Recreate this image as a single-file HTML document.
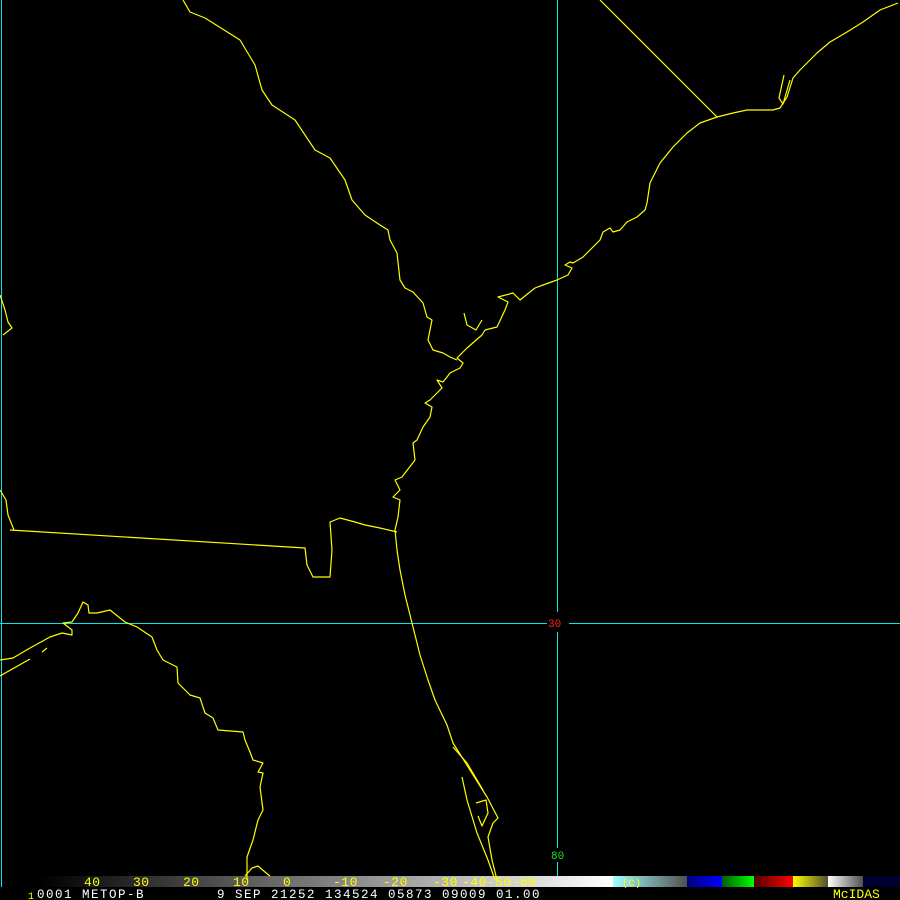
<!DOCTYPE html>
<html><head><style>
html,body{margin:0;padding:0;background:#000;width:900px;height:900px;overflow:hidden}
svg{position:absolute;left:0;top:0}
.t{font-family:"Liberation Mono",monospace;font-size:12.5px;letter-spacing:1.5px}
</style></head><body>
<svg width="900" height="900" viewBox="0 0 900 900">
<defs>
<linearGradient id="g" x1="0" x2="1">
<stop offset="0" stop-color="#000"/><stop offset="1" stop-color="#fff"/>
</linearGradient>
<linearGradient id="c" x1="0" x2="1"><stop offset="0" stop-color="#a0ffff"/><stop offset="1" stop-color="#505050"/></linearGradient>
<linearGradient id="b" x1="0" x2="1"><stop offset="0" stop-color="#000080"/><stop offset="1" stop-color="#0000ff"/></linearGradient>
<linearGradient id="gr" x1="0" x2="1"><stop offset="0" stop-color="#006000"/><stop offset="1" stop-color="#00ff00"/></linearGradient>
<linearGradient id="r" x1="0" x2="1"><stop offset="0" stop-color="#500000"/><stop offset="1" stop-color="#ff0000"/></linearGradient>
<linearGradient id="y" x1="0" x2="1"><stop offset="0" stop-color="#ffff00"/><stop offset="1" stop-color="#505030"/></linearGradient>
<linearGradient id="w" x1="0" x2="1"><stop offset="0" stop-color="#ffffff"/><stop offset="1" stop-color="#505050"/></linearGradient>
</defs>
<rect x="40" y="876" width="573" height="11" fill="url(#g)"/>
<rect x="613" y="876" width="74" height="11" fill="url(#c)"/>
<rect x="687" y="876" width="35" height="11" fill="url(#b)"/>
<rect x="722" y="876" width="32" height="11" fill="url(#gr)"/>
<rect x="754" y="876" width="39" height="11" fill="url(#r)"/>
<rect x="793" y="876" width="35" height="11" fill="url(#y)"/>
<rect x="828" y="876" width="35" height="11" fill="url(#w)"/>
<rect x="863" y="876" width="37" height="11" fill="#000030"/>
<g fill="#00e8e8">
<rect x="1" y="0" width="1" height="887"/>
<rect x="557" y="0" width="1" height="612"/>
<rect x="557" y="632" width="1" height="216"/>
<rect x="557" y="862" width="1" height="14"/>
<rect x="0" y="623" width="547" height="1"/>
<rect x="569" y="623" width="331" height="1"/>
</g>
<text x="548" y="627" fill="#ff2020" class="t" style="font-size:11px;letter-spacing:0">30</text>
<text x="551" y="859" fill="#20e020" class="t" style="font-size:11px;letter-spacing:0">80</text>
<g stroke="#ffff00" stroke-width="1.2" fill="none" stroke-linejoin="round">
<polyline points="183,0 190,12 205,18 240,40 255,65 262,90 272,105 295,120 315,150 330,158 345,180 352,200 365,215 380,225 388,230 390,240 397,253 400,280 405,288 413,292 423,303 427,317 432,320 428,340 433,350 443,353 450,357 457,360"/>
<polyline points="600,0 717,117"/>
<polyline points="898,3 880,10 863,22 847,32 830,42 817,53 800,70 793,78 787,97 780,108 773,110 747,110 733,113 717,117 700,123 687,133 673,147 660,163 650,183 647,203 645,210 637,217 627,222 620,230 613,232 610,228 603,232 600,240 593,247 583,257 573,263 570,262 565,265 572,268 568,275 557,280 543,285 535,288 520,300 513,293 498,297 508,302 505,310 497,327 485,330 482,335 467,348 462,353 457,358 463,363 460,368 450,373 447,377 443,382 437,380 442,388 430,400 425,403 432,407 430,417 423,427 417,440 413,443 415,460 402,477 395,480 400,490 393,497 400,500 398,517 395,530 397,550 400,570 405,595 410,615 415,635 420,655 428,680 435,700 447,725 453,743 470,770 487,797 498,818 493,823 488,837 492,860 497,880"/>
<polyline points="462,777 467,800 477,833 488,860 495,880"/>
<polyline points="453,747 467,763 483,790"/>
<polyline points="476,803 486,800 488,813 482,826 478,816"/>
<polyline points="464,313 467,325 476,330 482,320"/>
<polyline points="784,75 779,98 783,104 790,80"/>
<polyline points="10,530 305,548 307,565 313,577 330,577 332,550 330,522 340,518 355,522 365,525 380,528 397,532"/>
<polyline points="0,295 5,310 8,322 12,328 3,335"/>
<polyline points="0,490 6,500 8,515 14,530"/>
<polyline points="0,660 13,658 30,648 50,637 62,633 72,635 72,630 63,623 72,622 78,613 83,602 88,605 89,613 97,613 110,610 125,622 137,627 152,637 157,650 163,660 177,667 178,683 190,695 200,698 205,713 213,718 218,730 243,732 245,740 250,752 253,760 263,763 258,772 263,773 260,787 263,810 258,820 253,840 247,857 247,880"/>
<polyline points="0,676 30,659"/>
<polyline points="42,652 47,648"/>
<polyline points="245,876 252,868 258,866 265,872 270,876"/>
</g>
<g class="t" fill="#ffff00" style="font-size:13px;letter-spacing:0.5px">
<text x="84" y="886">40</text><text x="133" y="886">30</text><text x="183" y="886">20</text><text x="233" y="886">10</text><text x="283" y="886">0</text>
<text x="333" y="886">-10</text><text x="383" y="886">-20</text><text x="433" y="886">-30</text><text x="462" y="886">-40-50-60</text>
<text x="622" y="886" style="font-size:10px">(C)</text>
<text x="833" y="898" style="letter-spacing:0">McIDAS</text>
<text x="28" y="899" style="font-size:10px">1</text>
</g>
<g class="t" fill="#ffffff">
<text x="37" y="898">0001 METOP-B</text>
<text x="217" y="898">9 SEP 21252 134524 05873 09009 01.00</text>
</g>
</svg>
</body></html>
